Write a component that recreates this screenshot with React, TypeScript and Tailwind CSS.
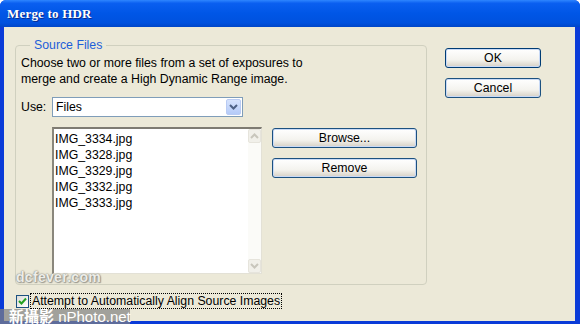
import React from "react";

const ui = { fontFamily: '"Liberation Sans", Arial, sans-serif' };

function XPButton({ label, className }: { label: string; className?: string }) {
  return (
    <div
      className={
        "flex items-center justify-center h-[20px] rounded-[3px] border border-[#1C5180] bg-[linear-gradient(to_bottom,#FFFFFF,#F4F3EE_60%,#D6D0C5)] text-[12.3px] text-black shadow-[inset_0_0_0_1px_#C9DAF6] " +
        (className ?? "")
      }
    >
      {label}
    </div>
  );
}

function Chevron({ up, color }: { up?: boolean; color: string }) {
  return (
    <svg width="9" height="6" viewBox="0 0 9 6">
      <path
        d={up ? "M1 5 L4.5 1.5 L8 5" : "M1 1 L4.5 4.5 L8 1"}
        fill="none"
        stroke={color}
        strokeWidth="2"
      />
    </svg>
  );
}

export default function App() {
  const files = ["IMG_3334.jpg", "IMG_3328.jpg", "IMG_3329.jpg", "IMG_3332.jpg", "IMG_3333.jpg"];
  return (
    <div className="relative w-[580px] h-[324px] flex flex-col overflow-hidden bg-[#0A3BD8] rounded-t-[6px]" style={ui}>
      {/* Title bar */}
      <div className="h-[27px] shrink-0 flex items-center pl-[7px] bg-[linear-gradient(to_bottom,#2E86FF,#0A5FF0_12%,#0056E6_50%,#0051DE_85%,#0046C8)]">
        <span
          className="text-white font-bold text-[13px] tracking-[0.2px] [text-shadow:1px_1px_0_#0A2A8A]"
          style={{ fontFamily: '"Liberation Serif", "Times New Roman", serif' }}
        >
          Merge to HDR
        </span>
      </div>

      {/* Body */}
      <div className="relative flex-1 ml-[4px] mr-[5px] mb-[3px] bg-[#ECE9D8] flex flex-col pl-[11px] pt-[18px]">
        <div className="flex">
          {/* Group box */}
          <div className="relative w-[412px] h-[240px] border border-[#D0D0BF] rounded-[4px] pl-[5px] pt-[9px]">
            <span className="absolute left-[14px] top-[-9px] px-[4px] bg-[#ECE9D8] text-[12.3px] leading-[16px] text-[#1E5FD8]">
              Source Files
            </span>
            <p className="text-[12.3px] leading-[16px] text-black">
              Choose two or more files from a set of exposures to
              <br />
              merge and create a High Dynamic Range image.
            </p>
            <div className="flex items-center mt-[10px] h-[20px]">
              <span className="w-[31px] text-[12.3px] text-black">Use:</span>
              <div className="w-[191px] h-[20px] border border-[#7F9DB9] bg-white flex items-center">
                <span className="flex-1 pl-[3px] text-[12.3px] text-black">Files</span>
                <div className="w-[15px] h-[16px] mr-[1px] rounded-[2px] bg-[linear-gradient(to_bottom,#D6E3FD,#B5CBF8)] border border-[#B9CBF3] flex items-center justify-center">
                  <Chevron color="#4D6185" />
                </div>
              </div>
            </div>
            <div className="flex mt-[10px]">
              <div className="ml-[31px] w-[210px] h-[147px] flex bg-white border-t-2 border-l-2 border-t-[#7E7B72] border-l-[#8A877C] border-r border-b border-r-[#E3E1D6] border-b-[#E3E1D6]">
                <div className="flex-1 pl-[1px] pt-[2px]">
                  {files.map((f) => (
                    <div key={f} className="text-[12.3px] leading-[16px] text-black">
                      {f}
                    </div>
                  ))}
                </div>
                <div className="w-[13px] flex flex-col justify-between bg-[#FBFBF8]">
                  <div className="h-[14px] bg-[#F1F0EA] border border-[#E6E4DC] rounded-[2px] flex items-center justify-center">
                    <Chevron up color="#C8C6BC" />
                  </div>
                  <div className="h-[14px] bg-[#F1F0EA] border border-[#E6E4DC] rounded-[2px] flex items-center justify-center">
                    <Chevron color="#C8C6BC" />
                  </div>
                </div>
              </div>
              <div className="ml-[10px] mt-[1px] flex flex-col gap-[10px]">
                <XPButton label="Browse..." className="w-[145px]" />
                <XPButton label="Remove" className="w-[145px]" />
              </div>
            </div>
          </div>

          {/* OK / Cancel */}
          <div className="ml-[18px] mt-[3px] flex flex-col gap-[10px]">
            <XPButton label="OK" className="w-[96px] border-[#003C74]" />
            <XPButton label="Cancel" className="w-[96px]" />
          </div>
        </div>

        {/* Checkbox */}
        <div className="flex items-center mt-[8px] ml-[1px]">
          <div className="w-[13px] h-[13px] border border-[#1C5180] bg-[linear-gradient(to_bottom_right,#DCDCD7,#FFFFFF)] flex items-center justify-center">
            <svg width="9" height="9" viewBox="0 0 9 9">
              <path d="M1 4 L3.5 6.5 L8 1.5" fill="none" stroke="#21A121" strokeWidth="2" />
            </svg>
          </div>
          <span className="ml-[1px] px-[1px] border border-dotted border-black text-[12.3px] leading-[14px] text-black whitespace-nowrap">
            Attempt to Automatically Align Source Images
          </span>
        </div>

        {/* Watermark */}
        <span className="absolute left-[12px] top-[242px] text-[14px] leading-[16px] font-bold tracking-[0.3px] text-[#EDEDE8] whitespace-nowrap [text-shadow:0_0_1px_#8C8C84,0_0_2px_#8C8C84,1px_1px_1px_#A0A098]">
          dcfever.com
        </span>
      </div>
      <div className="absolute left-0 top-[309px] w-[130px] h-[15px] bg-[rgba(130,130,130,0.7)] flex items-center pl-[9px]">
        <span
          className="text-white text-[15px] leading-[15px] whitespace-nowrap"
          style={{ fontFamily: '"Liberation Sans", "Noto Sans CJK TC", sans-serif' }}
        >
          <span className="font-bold">新攝影</span> nPhoto.net
        </span>
      </div>
    </div>
  );
}
